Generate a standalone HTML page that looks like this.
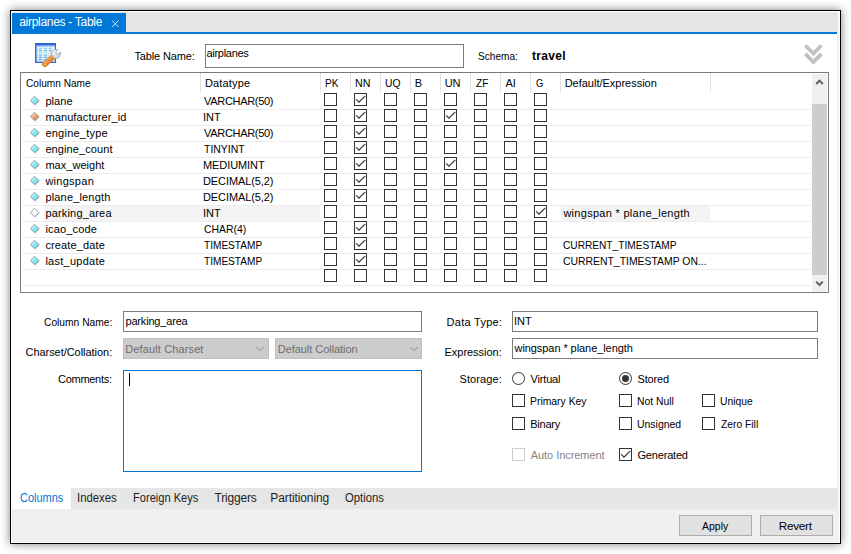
<!DOCTYPE html>
<html><head><meta charset="utf-8"><title>airplanes - Table</title>
<style>
*{box-sizing:border-box;margin:0;padding:0}
html,body{width:851px;height:554px;background:#fff;overflow:hidden}
body{position:relative;font-family:"Liberation Sans",sans-serif;font-size:11px;color:#000}
#win{position:absolute;left:10px;top:10px;width:831px;height:534px;border:1px solid #000;background:#fff;box-shadow:0 0 9px rgba(0,0,0,.5)}
.t{position:absolute;white-space:nowrap;line-height:14px;height:14px;transform-origin:0 0}
.box{position:absolute;border:1px solid #7a7a7a;background:#fff}
.cb{position:absolute;width:13px;height:13px;border:1px solid #333;background:#fff}
.hl{position:absolute;left:22px;width:789px;height:1px;background:#ececec}
.vs{position:absolute;top:73px;width:1px;height:19px;background:#e2e2e2}
</style></head><body>
<div id="win"></div>
<div style="position:absolute;left:12px;top:12px;width:827px;height:530px;background:#f0f0f0"></div>
<div style="position:absolute;left:12px;top:34px;width:825px;height:454px;background:#fff"></div>
<div style="position:absolute;left:12px;top:12px;width:825px;height:20px;background:#e6e6e6"></div>
<div style="position:absolute;left:12px;top:13px;width:114px;height:19px;background:#0078d7"></div>
<div style="position:absolute;left:12px;top:32px;width:825px;height:2px;background:#0078d7"></div>
<svg style="position:absolute;left:111px;top:19px" width="9" height="9" viewBox="0 0 9 9"><path d="M1 1.5 L7.5 8 M7.5 1.5 L1 8" stroke="#d6e8f8" stroke-width="1" fill="none"/></svg>
<div class="box" style="left:205px;top:44px;width:259px;height:24px"></div>
<svg style="position:absolute;left:800px;top:40px" width="28" height="28" viewBox="800 40 28 28"><g fill="none" stroke="#c1c1c1" stroke-width="3.8" stroke-linejoin="miter"><polyline points="805.4,45.5 813.4,53.6 821.4,45.5"/><polyline points="805.4,53.9 813.4,62 821.4,53.9"/></g></svg>
<svg style="position:absolute;left:32px;top:40px" width="32" height="30" viewBox="32 40 32 30">
<defs><linearGradient id="tg" x1="0" y1="0" x2="0" y2="1"><stop offset="0" stop-color="#eef6fe"/><stop offset="1" stop-color="#cfe2f8"/></linearGradient>
<linearGradient id="wg" x1="0" y1="0" x2="1" y2="1"><stop offset="0" stop-color="#f5ad5c"/><stop offset="1" stop-color="#d9781c"/></linearGradient>
<linearGradient id="sg" x1="0" y1="0" x2="1" y2="1"><stop offset="0" stop-color="#f7f8fa"/><stop offset="1" stop-color="#c9ccd3"/></linearGradient></defs>
<rect x="35" y="43" width="21" height="20" fill="#3b69d4"/>
<rect x="36.3" y="45" width="18.7" height="16.8" fill="#9cc6f6"/>
<rect x="37.3" y="46.4" width="17.2" height="15" fill="url(#tg)"/>
<rect x="35" y="43" width="21" height="2.3" fill="#3563d3"/>
<path d="M36 45.8h19" stroke="#5c9ff0" stroke-width="1" stroke-dasharray="1.6 1"/>
<g stroke="#62bce3" stroke-width="1.1"><path d="M39 48.3h3M39 50.6h3M39 55.2h3M39 57.4h3M39 59.6h3M44 48.3h3M44 50.6h3M44 55.2h3M44 57.4h3M44 59.6h3M49 48.3h3M49 50.6h3"/></g>
<g stroke="#b5dfd6" stroke-width="1.1"><path d="M39 52.9h3M44 52.9h3M49 52.9h3"/></g>
<line x1="44.9" y1="64.2" x2="52.6" y2="57.2" stroke="#cf7a22" stroke-width="5.6" stroke-linecap="round"/>
<line x1="44.9" y1="64.1" x2="52.5" y2="57.2" stroke="url(#wg)" stroke-width="4.6" stroke-linecap="round"/>
<circle cx="45" cy="62.2" r=".55" fill="#ffe7a6"/><circle cx="45" cy="64.5" r=".55" fill="#ffe7a6"/>
<circle cx="56.1" cy="53.9" r="4.5" fill="url(#sg)" stroke="#9a9ea8" stroke-width=".7"/>
<line x1="56.9" y1="53.1" x2="61" y2="48.6" stroke="#f6f9fe" stroke-width="2.7"/>
<path d="M57.3 49.6 L55.9 52 Q55.6 53.9 57.6 54.3 L60.4 52.9" stroke="#8f949e" stroke-width=".6" fill="none"/>
</svg>
<div style="position:absolute;left:20px;top:72px;width:809px;height:221px;border:1px solid #7a7a7a;background:#fff"></div>
<div style="position:absolute;left:44px;top:206px;width:276px;height:15px;background:#f4f4f4"></div>
<div style="position:absolute;left:561px;top:206px;width:149px;height:15px;background:#f4f4f4"></div>
<div class="hl" style="top:109px"></div>
<div class="hl" style="top:125px"></div>
<div class="hl" style="top:141px"></div>
<div class="hl" style="top:157px"></div>
<div class="hl" style="top:173px"></div>
<div class="hl" style="top:189px"></div>
<div class="hl" style="top:205px"></div>
<div class="hl" style="top:221px"></div>
<div class="hl" style="top:237px"></div>
<div class="hl" style="top:253px"></div>
<div class="hl" style="top:269px"></div>
<div class="hl" style="top:285px"></div>
<div class="vs" style="left:200px"></div>
<div class="vs" style="left:320px"></div>
<div class="vs" style="left:350px"></div>
<div class="vs" style="left:380px"></div>
<div class="vs" style="left:410px"></div>
<div class="vs" style="left:440px"></div>
<div class="vs" style="left:470px"></div>
<div class="vs" style="left:500px"></div>
<div class="vs" style="left:530px"></div>
<div class="vs" style="left:560px"></div>
<div class="vs" style="left:710px"></div>
<div style="position:absolute;left:812px;top:74px;width:15px;height:218px;background:#f0f0f0"></div>
<div style="position:absolute;left:812px;top:104px;width:15px;height:171px;background:#cdcdcd"></div>
<svg style="position:absolute;left:812px;top:74px" width="15" height="218" viewBox="812 74 15 218"><g fill="none" stroke="#606060" stroke-width="2"><polyline points="816.2,84 819.5,80.6 822.8,84"/><polyline points="816.2,281.6 819.5,285 822.8,281.6"/></g></svg>
<svg width="0" height="0" style="position:absolute"><defs>
<linearGradient id="dc" x1="0" y1="0" x2="1" y2="1"><stop offset="0" stop-color="#f2feff"/><stop offset=".5" stop-color="#8eeaf2"/><stop offset="1" stop-color="#4fcfe0"/></linearGradient>
<linearGradient id="do" x1="0" y1="0" x2="1" y2="1"><stop offset="0" stop-color="#fff3e2"/><stop offset=".5" stop-color="#f0ab70"/><stop offset="1" stop-color="#d6703a"/></linearGradient>
<linearGradient id="dw" x1="0" y1="0" x2="1" y2="1"><stop offset="0" stop-color="#ffffff"/><stop offset="1" stop-color="#f2f6f8"/></linearGradient>
</defs></svg>
<svg style="position:absolute;left:28px;top:93px" width="14" height="16" viewBox="28 93 14 16"><path d="M35.4 97.15 L39.65 101.4 L35.4 105.65 L31.150000000000002 101.4Z" fill="#000" opacity=".16"/><path d="M34.6 96.25 L38.85 100.5 L34.6 104.75 L30.35 100.5Z" fill="url(#dc)" stroke="#7d8f99" stroke-width=".8"/></svg>
<svg style="position:absolute;left:28px;top:109px" width="14" height="16" viewBox="28 109 14 16"><path d="M35.4 113.15 L39.65 117.4 L35.4 121.65 L31.150000000000002 117.4Z" fill="#000" opacity=".16"/><path d="M34.6 112.25 L38.85 116.5 L34.6 120.75 L30.35 116.5Z" fill="url(#do)" stroke="#7d8f99" stroke-width=".8"/></svg>
<svg style="position:absolute;left:28px;top:125px" width="14" height="16" viewBox="28 125 14 16"><path d="M35.4 129.15 L39.65 133.4 L35.4 137.65 L31.150000000000002 133.4Z" fill="#000" opacity=".16"/><path d="M34.6 128.25 L38.85 132.5 L34.6 136.75 L30.35 132.5Z" fill="url(#dc)" stroke="#7d8f99" stroke-width=".8"/></svg>
<svg style="position:absolute;left:28px;top:141px" width="14" height="16" viewBox="28 141 14 16"><path d="M35.4 145.15 L39.65 149.4 L35.4 153.65 L31.150000000000002 149.4Z" fill="#000" opacity=".16"/><path d="M34.6 144.25 L38.85 148.5 L34.6 152.75 L30.35 148.5Z" fill="url(#dc)" stroke="#7d8f99" stroke-width=".8"/></svg>
<svg style="position:absolute;left:28px;top:157px" width="14" height="16" viewBox="28 157 14 16"><path d="M35.4 161.15 L39.65 165.4 L35.4 169.65 L31.150000000000002 165.4Z" fill="#000" opacity=".16"/><path d="M34.6 160.25 L38.85 164.5 L34.6 168.75 L30.35 164.5Z" fill="url(#dc)" stroke="#7d8f99" stroke-width=".8"/></svg>
<svg style="position:absolute;left:28px;top:173px" width="14" height="16" viewBox="28 173 14 16"><path d="M35.4 177.15 L39.65 181.4 L35.4 185.65 L31.150000000000002 181.4Z" fill="#000" opacity=".16"/><path d="M34.6 176.25 L38.85 180.5 L34.6 184.75 L30.35 180.5Z" fill="url(#dc)" stroke="#7d8f99" stroke-width=".8"/></svg>
<svg style="position:absolute;left:28px;top:189px" width="14" height="16" viewBox="28 189 14 16"><path d="M35.4 193.15 L39.65 197.4 L35.4 201.65 L31.150000000000002 197.4Z" fill="#000" opacity=".16"/><path d="M34.6 192.25 L38.85 196.5 L34.6 200.75 L30.35 196.5Z" fill="url(#dc)" stroke="#7d8f99" stroke-width=".8"/></svg>
<svg style="position:absolute;left:28px;top:205px" width="14" height="16" viewBox="28 205 14 16"><path d="M35.4 209.15 L39.65 213.4 L35.4 217.65 L31.150000000000002 213.4Z" fill="#000" opacity=".16"/><path d="M34.6 208.25 L38.85 212.5 L34.6 216.75 L30.35 212.5Z" fill="url(#dw)" stroke="#7d8f99" stroke-width=".8"/></svg>
<svg style="position:absolute;left:28px;top:221px" width="14" height="16" viewBox="28 221 14 16"><path d="M35.4 225.15 L39.65 229.4 L35.4 233.65 L31.150000000000002 229.4Z" fill="#000" opacity=".16"/><path d="M34.6 224.25 L38.85 228.5 L34.6 232.75 L30.35 228.5Z" fill="url(#dc)" stroke="#7d8f99" stroke-width=".8"/></svg>
<svg style="position:absolute;left:28px;top:237px" width="14" height="16" viewBox="28 237 14 16"><path d="M35.4 241.15 L39.65 245.4 L35.4 249.65 L31.150000000000002 245.4Z" fill="#000" opacity=".16"/><path d="M34.6 240.25 L38.85 244.5 L34.6 248.75 L30.35 244.5Z" fill="url(#dc)" stroke="#7d8f99" stroke-width=".8"/></svg>
<svg style="position:absolute;left:28px;top:253px" width="14" height="16" viewBox="28 253 14 16"><path d="M35.4 257.15 L39.65 261.4 L35.4 265.65 L31.150000000000002 261.4Z" fill="#000" opacity=".16"/><path d="M34.6 256.25 L38.85 260.5 L34.6 264.75 L30.35 260.5Z" fill="url(#dc)" stroke="#7d8f99" stroke-width=".8"/></svg>
<div class="cb" style="left:324px;top:93px"></div>
<div class="cb" style="left:354px;top:93px"></div>
<svg style="position:absolute;left:354px;top:93px" width="13" height="13" viewBox="0 0 13 13"><polyline points="2.2,6.3 5,9.2 11.3,2.8" fill="none" stroke="#333" stroke-width="1.2"/></svg>
<div class="cb" style="left:384px;top:93px"></div>
<div class="cb" style="left:414px;top:93px"></div>
<div class="cb" style="left:444px;top:93px"></div>
<div class="cb" style="left:474px;top:93px"></div>
<div class="cb" style="left:504px;top:93px"></div>
<div class="cb" style="left:534px;top:93px"></div>
<div class="cb" style="left:324px;top:109px"></div>
<div class="cb" style="left:354px;top:109px"></div>
<svg style="position:absolute;left:354px;top:109px" width="13" height="13" viewBox="0 0 13 13"><polyline points="2.2,6.3 5,9.2 11.3,2.8" fill="none" stroke="#333" stroke-width="1.2"/></svg>
<div class="cb" style="left:384px;top:109px"></div>
<div class="cb" style="left:414px;top:109px"></div>
<div class="cb" style="left:444px;top:109px"></div>
<svg style="position:absolute;left:444px;top:109px" width="13" height="13" viewBox="0 0 13 13"><polyline points="2.2,6.3 5,9.2 11.3,2.8" fill="none" stroke="#333" stroke-width="1.2"/></svg>
<div class="cb" style="left:474px;top:109px"></div>
<div class="cb" style="left:504px;top:109px"></div>
<div class="cb" style="left:534px;top:109px"></div>
<div class="cb" style="left:324px;top:125px"></div>
<div class="cb" style="left:354px;top:125px"></div>
<svg style="position:absolute;left:354px;top:125px" width="13" height="13" viewBox="0 0 13 13"><polyline points="2.2,6.3 5,9.2 11.3,2.8" fill="none" stroke="#333" stroke-width="1.2"/></svg>
<div class="cb" style="left:384px;top:125px"></div>
<div class="cb" style="left:414px;top:125px"></div>
<div class="cb" style="left:444px;top:125px"></div>
<div class="cb" style="left:474px;top:125px"></div>
<div class="cb" style="left:504px;top:125px"></div>
<div class="cb" style="left:534px;top:125px"></div>
<div class="cb" style="left:324px;top:141px"></div>
<div class="cb" style="left:354px;top:141px"></div>
<svg style="position:absolute;left:354px;top:141px" width="13" height="13" viewBox="0 0 13 13"><polyline points="2.2,6.3 5,9.2 11.3,2.8" fill="none" stroke="#333" stroke-width="1.2"/></svg>
<div class="cb" style="left:384px;top:141px"></div>
<div class="cb" style="left:414px;top:141px"></div>
<div class="cb" style="left:444px;top:141px"></div>
<div class="cb" style="left:474px;top:141px"></div>
<div class="cb" style="left:504px;top:141px"></div>
<div class="cb" style="left:534px;top:141px"></div>
<div class="cb" style="left:324px;top:157px"></div>
<div class="cb" style="left:354px;top:157px"></div>
<svg style="position:absolute;left:354px;top:157px" width="13" height="13" viewBox="0 0 13 13"><polyline points="2.2,6.3 5,9.2 11.3,2.8" fill="none" stroke="#333" stroke-width="1.2"/></svg>
<div class="cb" style="left:384px;top:157px"></div>
<div class="cb" style="left:414px;top:157px"></div>
<div class="cb" style="left:444px;top:157px"></div>
<svg style="position:absolute;left:444px;top:157px" width="13" height="13" viewBox="0 0 13 13"><polyline points="2.2,6.3 5,9.2 11.3,2.8" fill="none" stroke="#333" stroke-width="1.2"/></svg>
<div class="cb" style="left:474px;top:157px"></div>
<div class="cb" style="left:504px;top:157px"></div>
<div class="cb" style="left:534px;top:157px"></div>
<div class="cb" style="left:324px;top:173px"></div>
<div class="cb" style="left:354px;top:173px"></div>
<svg style="position:absolute;left:354px;top:173px" width="13" height="13" viewBox="0 0 13 13"><polyline points="2.2,6.3 5,9.2 11.3,2.8" fill="none" stroke="#333" stroke-width="1.2"/></svg>
<div class="cb" style="left:384px;top:173px"></div>
<div class="cb" style="left:414px;top:173px"></div>
<div class="cb" style="left:444px;top:173px"></div>
<div class="cb" style="left:474px;top:173px"></div>
<div class="cb" style="left:504px;top:173px"></div>
<div class="cb" style="left:534px;top:173px"></div>
<div class="cb" style="left:324px;top:189px"></div>
<div class="cb" style="left:354px;top:189px"></div>
<svg style="position:absolute;left:354px;top:189px" width="13" height="13" viewBox="0 0 13 13"><polyline points="2.2,6.3 5,9.2 11.3,2.8" fill="none" stroke="#333" stroke-width="1.2"/></svg>
<div class="cb" style="left:384px;top:189px"></div>
<div class="cb" style="left:414px;top:189px"></div>
<div class="cb" style="left:444px;top:189px"></div>
<div class="cb" style="left:474px;top:189px"></div>
<div class="cb" style="left:504px;top:189px"></div>
<div class="cb" style="left:534px;top:189px"></div>
<div class="cb" style="left:324px;top:205px"></div>
<div class="cb" style="left:354px;top:205px"></div>
<div class="cb" style="left:384px;top:205px"></div>
<div class="cb" style="left:414px;top:205px"></div>
<div class="cb" style="left:444px;top:205px"></div>
<div class="cb" style="left:474px;top:205px"></div>
<div class="cb" style="left:504px;top:205px"></div>
<div class="cb" style="left:534px;top:205px"></div>
<svg style="position:absolute;left:534px;top:205px" width="13" height="13" viewBox="0 0 13 13"><polyline points="2.2,6.3 5,9.2 11.3,2.8" fill="none" stroke="#333" stroke-width="1.2"/></svg>
<div class="cb" style="left:324px;top:221px"></div>
<div class="cb" style="left:354px;top:221px"></div>
<svg style="position:absolute;left:354px;top:221px" width="13" height="13" viewBox="0 0 13 13"><polyline points="2.2,6.3 5,9.2 11.3,2.8" fill="none" stroke="#333" stroke-width="1.2"/></svg>
<div class="cb" style="left:384px;top:221px"></div>
<div class="cb" style="left:414px;top:221px"></div>
<div class="cb" style="left:444px;top:221px"></div>
<div class="cb" style="left:474px;top:221px"></div>
<div class="cb" style="left:504px;top:221px"></div>
<div class="cb" style="left:534px;top:221px"></div>
<div class="cb" style="left:324px;top:237px"></div>
<div class="cb" style="left:354px;top:237px"></div>
<svg style="position:absolute;left:354px;top:237px" width="13" height="13" viewBox="0 0 13 13"><polyline points="2.2,6.3 5,9.2 11.3,2.8" fill="none" stroke="#333" stroke-width="1.2"/></svg>
<div class="cb" style="left:384px;top:237px"></div>
<div class="cb" style="left:414px;top:237px"></div>
<div class="cb" style="left:444px;top:237px"></div>
<div class="cb" style="left:474px;top:237px"></div>
<div class="cb" style="left:504px;top:237px"></div>
<div class="cb" style="left:534px;top:237px"></div>
<div class="cb" style="left:324px;top:253px"></div>
<div class="cb" style="left:354px;top:253px"></div>
<svg style="position:absolute;left:354px;top:253px" width="13" height="13" viewBox="0 0 13 13"><polyline points="2.2,6.3 5,9.2 11.3,2.8" fill="none" stroke="#333" stroke-width="1.2"/></svg>
<div class="cb" style="left:384px;top:253px"></div>
<div class="cb" style="left:414px;top:253px"></div>
<div class="cb" style="left:444px;top:253px"></div>
<div class="cb" style="left:474px;top:253px"></div>
<div class="cb" style="left:504px;top:253px"></div>
<div class="cb" style="left:534px;top:253px"></div>
<div class="cb" style="left:324px;top:269px"></div>
<div class="cb" style="left:354px;top:269px"></div>
<div class="cb" style="left:384px;top:269px"></div>
<div class="cb" style="left:414px;top:269px"></div>
<div class="cb" style="left:444px;top:269px"></div>
<div class="cb" style="left:474px;top:269px"></div>
<div class="cb" style="left:504px;top:269px"></div>
<div class="cb" style="left:534px;top:269px"></div>
<div class="box" style="left:123px;top:311px;width:299px;height:21px"></div>
<div style="position:absolute;left:123px;top:338px;width:146px;height:21px;background:#cccccc;border:1px solid #bfbfbf"></div>
<div style="position:absolute;left:275px;top:338px;width:147px;height:21px;background:#cccccc;border:1px solid #bfbfbf"></div>
<svg style="position:absolute;left:256px;top:346px" width="9" height="6" viewBox="0 0 9 6"><polyline points="0.5,1 4.2,4.7 7.9,1" fill="none" stroke="#8c8c8c" stroke-width="1"/></svg>
<svg style="position:absolute;left:409.5px;top:346px" width="9" height="6" viewBox="0 0 9 6"><polyline points="0.5,1 4.2,4.7 7.9,1" fill="none" stroke="#8c8c8c" stroke-width="1"/></svg>
<div style="position:absolute;left:123px;top:370px;width:299px;height:102px;border:1px solid #0078d7;background:#fff"></div>
<div style="position:absolute;left:129px;top:373px;width:1px;height:13px;background:#000"></div>
<div class="box" style="left:512px;top:311px;width:306px;height:21px"></div>
<div class="box" style="left:512px;top:338px;width:306px;height:21px"></div>
<div style="position:absolute;left:512px;top:372px;width:13px;height:13px;border:1px solid #333;border-radius:50%;background:#fff"></div>
<div style="position:absolute;left:619px;top:372px;width:13px;height:13px;border:1px solid #333;border-radius:50%;background:#fff"></div>
<div style="position:absolute;left:622px;top:375px;width:7px;height:7px;border-radius:50%;background:#333"></div>
<div class="cb" style="left:512px;top:394px"></div>
<div class="cb" style="left:619px;top:394px"></div>
<div class="cb" style="left:702px;top:394px"></div>
<div class="cb" style="left:512px;top:417px"></div>
<div class="cb" style="left:619px;top:417px"></div>
<div class="cb" style="left:702px;top:417px"></div>
<div class="cb" style="left:619px;top:448px"></div>
<div class="cb" style="left:512px;top:448px;border-color:#cccccc"></div>
<svg style="position:absolute;left:619px;top:448px" width="13" height="13" viewBox="0 0 13 13"><polyline points="2.2,6.3 5,9.2 11.3,2.8" fill="none" stroke="#333" stroke-width="1.2"/></svg>
<div style="position:absolute;left:12px;top:488px;width:825px;height:21px;background:#e6e6e6"></div>
<div style="position:absolute;left:12px;top:488px;width:59px;height:21px;background:#fff"></div>
<div style="position:absolute;left:679px;top:515px;width:73px;height:21px;background:#e1e1e1;border:1px solid #adadad"></div>
<div style="position:absolute;left:760px;top:515px;width:73px;height:21px;background:#e1e1e1;border:1px solid #adadad"></div>
<div class="t" style="left:19.20px;top:15px;letter-spacing:-0.294px;font-size:12px;color:#fff;">airplanes - Table</div>
<div class="t" style="left:134.50px;top:49px;letter-spacing:-0.150px;">Table Name:</div>
<div class="t" style="left:206.40px;top:46px;letter-spacing:-0.275px;">airplanes</div>
<div class="t" style="left:478.00px;top:49px;transform:scaleX(0.9186);">Schema:</div>
<div class="t" style="left:532.00px;top:49px;letter-spacing:0.300px;font-size:12px;font-weight:bold;">travel</div>
<div class="t" style="left:25.70px;top:76px;transform:scaleX(0.9186);">Column Name</div>
<div class="t" style="left:205.00px;top:76px;letter-spacing:0.143px;">Datatype</div>
<div class="t" style="left:324.78px;top:76px;transform:scaleX(0.9231);">PK</div>
<div class="t" style="left:354.73px;top:76px;transform:scaleX(0.9714);">NN</div>
<div class="t" style="left:384.76px;top:76px;transform:scaleX(0.9400);">UQ</div>
<div class="t" style="left:414.70px;top:76px;">B</div>
<div class="t" style="left:444.70px;top:76px;letter-spacing:-0.200px;">UN</div>
<div class="t" style="left:475.50px;top:76px;transform:scaleX(0.9231);">ZF</div>
<div class="t" style="left:505.50px;top:76px;">AI</div>
<div class="t" style="left:535.70px;top:76px;transform:scaleX(0.8500);">G</div>
<div class="t" style="left:564.70px;top:76px;letter-spacing:-0.012px;">Default/Expression</div>
<div class="t" style="left:45.40px;top:94px;letter-spacing:0.075px;">plane</div>
<div class="t" style="left:204.00px;top:94px;letter-spacing:-0.300px;">VARCHAR(50)</div>
<div class="t" style="left:45.40px;top:110px;letter-spacing:0.114px;">manufacturer_id</div>
<div class="t" style="left:203.00px;top:110px;">INT</div>
<div class="t" style="left:45.40px;top:126px;letter-spacing:0.240px;">engine_type</div>
<div class="t" style="left:204.00px;top:126px;letter-spacing:-0.300px;">VARCHAR(50)</div>
<div class="t" style="left:45.40px;top:142px;letter-spacing:0.100px;">engine_count</div>
<div class="t" style="left:204.00px;top:142px;transform:scaleX(0.9488);">TINYINT</div>
<div class="t" style="left:45.40px;top:158px;letter-spacing:0.033px;">max_weight</div>
<div class="t" style="left:203.00px;top:158px;letter-spacing:-0.087px;">MEDIUMINT</div>
<div class="t" style="left:45.40px;top:174px;letter-spacing:0.271px;">wingspan</div>
<div class="t" style="left:203.00px;top:174px;letter-spacing:-0.091px;">DECIMAL(5,2)</div>
<div class="t" style="left:45.40px;top:190px;letter-spacing:0.173px;">plane_length</div>
<div class="t" style="left:203.00px;top:190px;letter-spacing:-0.091px;">DECIMAL(5,2)</div>
<div class="t" style="left:45.40px;top:206px;letter-spacing:0.173px;">parking_area</div>
<div class="t" style="left:203.00px;top:206px;">INT</div>
<div class="t" style="left:563.40px;top:206px;letter-spacing:0.289px;">wingspan * plane_length</div>
<div class="t" style="left:45.40px;top:222px;letter-spacing:0.163px;">icao_code</div>
<div class="t" style="left:204.00px;top:222px;transform:scaleX(0.9477);">CHAR(4)</div>
<div class="t" style="left:45.40px;top:238px;letter-spacing:0.130px;">create_date</div>
<div class="t" style="left:204.00px;top:238px;transform:scaleX(0.9175);">TIMESTAMP</div>
<div class="t" style="left:563.40px;top:238px;transform:scaleX(0.9215);">CURRENT_TIMESTAMP</div>
<div class="t" style="left:45.40px;top:254px;letter-spacing:0.260px;">last_update</div>
<div class="t" style="left:204.00px;top:254px;transform:scaleX(0.9175);">TIMESTAMP</div>
<div class="t" style="left:563.40px;top:254px;transform:scaleX(0.9460);">CURRENT_TIMESTAMP ON...</div>
<div class="t" style="left:43.75px;top:315px;transform:scaleX(0.9315);">Column Name:</div>
<div class="t" style="left:125.50px;top:314px;letter-spacing:-0.182px;">parking_area</div>
<div class="t" style="left:25.50px;top:345px;letter-spacing:-0.044px;">Charset/Collation:</div>
<div class="t" style="left:125.25px;top:342px;letter-spacing:0.125px;color:#6d6d6d;">Default Charset</div>
<div class="t" style="left:277.75px;top:342px;letter-spacing:-0.047px;color:#6d6d6d;">Default Collation</div>
<div class="t" style="left:58.00px;top:372px;letter-spacing:-0.281px;">Comments:</div>
<div class="t" style="left:446.60px;top:315px;letter-spacing:0.267px;">Data Type:</div>
<div class="t" style="left:514.00px;top:314px;">INT</div>
<div class="t" style="left:444.50px;top:345px;letter-spacing:-0.025px;">Expression:</div>
<div class="t" style="left:514.50px;top:341px;letter-spacing:-0.068px;">wingspan * plane_length</div>
<div class="t" style="left:459.50px;top:372px;letter-spacing:0.107px;">Storage:</div>
<div class="t" style="left:530.50px;top:372px;letter-spacing:-0.167px;">Virtual</div>
<div class="t" style="left:637.50px;top:372px;letter-spacing:-0.150px;">Stored</div>
<div class="t" style="left:530.36px;top:394px;transform:scaleX(0.9441);">Primary Key</div>
<div class="t" style="left:637.36px;top:394px;transform:scaleX(0.9395);">Not Null</div>
<div class="t" style="left:720.26px;top:394px;transform:scaleX(0.9353);">Unique</div>
<div class="t" style="left:530.30px;top:417px;letter-spacing:-0.260px;">Binary</div>
<div class="t" style="left:637.35px;top:417px;transform:scaleX(0.9489);">Unsigned</div>
<div class="t" style="left:720.50px;top:417px;transform:scaleX(0.9359);">Zero Fill</div>
<div class="t" style="left:530.75px;top:448px;letter-spacing:-0.058px;color:#838383;">Auto Increment</div>
<div class="t" style="left:637.50px;top:448px;letter-spacing:-0.188px;">Generated</div>
<div class="t" style="left:19.50px;top:491px;transform:scaleX(0.9149);font-size:12px;color:#0078d7;">Columns</div>
<div class="t" style="left:77.30px;top:491px;transform:scaleX(0.9451);font-size:12px;color:#1e1e1e;">Indexes</div>
<div class="t" style="left:133.32px;top:491px;transform:scaleX(0.9250);font-size:12px;color:#1e1e1e;">Foreign Keys</div>
<div class="t" style="left:214.50px;top:491px;letter-spacing:-0.179px;font-size:12px;color:#1e1e1e;">Triggers</div>
<div class="t" style="left:270.25px;top:491px;letter-spacing:-0.091px;font-size:12px;color:#1e1e1e;">Partitioning</div>
<div class="t" style="left:344.50px;top:491px;transform:scaleX(0.9390);font-size:12px;color:#1e1e1e;">Options</div>
<div class="t" style="left:701.50px;top:519px;transform:scaleX(0.9138);font-size:11.5px;">Apply</div>
<div class="t" style="left:778.80px;top:519px;letter-spacing:-0.240px;font-size:11.7px;">Revert</div>
</body></html>
